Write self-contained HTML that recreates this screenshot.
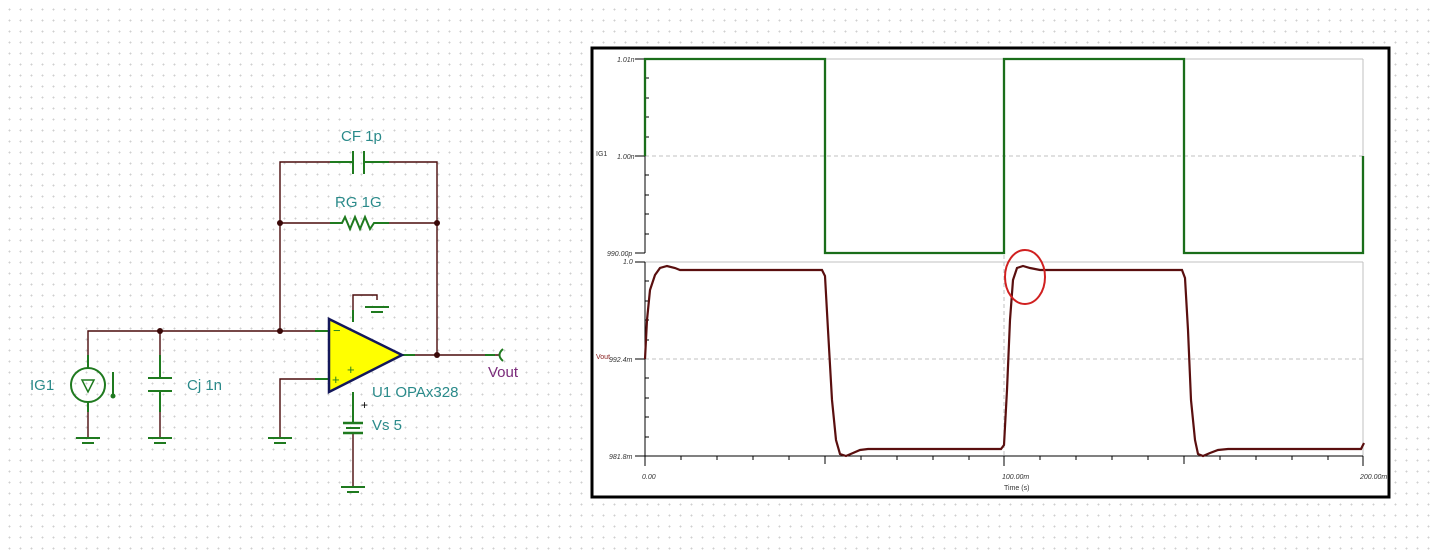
<!DOCTYPE html>
<html><head><meta charset="utf-8"><style>
html,body{margin:0;padding:0;}
body{width:1430px;height:552px;overflow:hidden;background:#fff;
background-image:radial-gradient(circle,#cfcfcf 0.8px,transparent 1.1px);background-size:11px 11px;background-position:4px 4px;}
svg{position:absolute;left:0;top:0;}
text{font-family:"Liberation Sans",sans-serif;}
</style></head><body>
<svg width="1430" height="552" viewBox="0 0 1430 552">
<g stroke="#4a0c0c" stroke-width="1.4" fill="none">
<polyline points="280,331 280,162 330,162"/>
<polyline points="389,162 437,162 437,355"/>
<line x1="280" y1="223" x2="330" y2="223"/>
<line x1="389" y1="223" x2="437" y2="223"/>
<polyline points="88,367 88,331 329,331"/>
<line x1="160" y1="331" x2="160" y2="372"/>
<line x1="402" y1="355" x2="499" y2="355"/>
<polyline points="280,438 280,379 329,379"/>
<polyline points="353,320 353,295 377,295 377,300"/>
<line x1="353" y1="392" x2="353" y2="420"/>
<line x1="353" y1="433" x2="353" y2="487"/>
<line x1="160" y1="397" x2="160" y2="438"/>
<line x1="88" y1="403" x2="88" y2="438"/>
</g>
<g fill="#3a0808">
<circle cx="280" cy="223" r="3"/><circle cx="437" cy="223" r="3"/>
<circle cx="160" cy="331" r="3"/><circle cx="280" cy="331" r="3"/><circle cx="437" cy="355" r="3"/>
</g>
<g stroke="#1f7a1f" stroke-width="2" fill="none">
<line x1="330" y1="162" x2="353" y2="162"/><line x1="364" y1="162" x2="389" y2="162"/>
<line x1="353" y1="151" x2="353" y2="174"/><line x1="364" y1="151" x2="364" y2="174"/>
<polyline points="330,223 342,223 345,217 350,229 355,217 360,229 365,217 370,229 374,223 389,223"/>
<line x1="160" y1="355" x2="160" y2="378"/><line x1="160" y1="391" x2="160" y2="412"/>
<line x1="148" y1="378" x2="172" y2="378"/><line x1="148" y1="391" x2="172" y2="391"/>
<circle cx="88" cy="385" r="17"/>
<polygon points="82,380 94,380 88,392" stroke-width="1.5"/>
<line x1="88" y1="355" x2="88" y2="368"/><line x1="88" y1="402" x2="88" y2="412"/>
<line x1="113" y1="372" x2="113" y2="395"/>
<line x1="315" y1="331" x2="329" y2="331"/><line x1="315" y1="379" x2="329" y2="379"/>
<line x1="402" y1="355" x2="415" y2="355"/><line x1="485" y1="355" x2="495" y2="355"/>
<path d="M503,349 Q496,355 503,361"/>
<line x1="353" y1="310" x2="353" y2="322"/><line x1="353" y1="392" x2="353" y2="405"/>
<line x1="353" y1="405" x2="353" y2="422"/>
<line x1="343" y1="423" x2="363" y2="423" stroke-width="2.5"/><line x1="346" y1="428" x2="360" y2="428"/>
<line x1="343" y1="433" x2="363" y2="433" stroke-width="2.5"/>
</g>
<circle cx="113" cy="396" r="2.5" fill="#1f7a1f"/>
<g stroke="#1f7a1f" stroke-width="2">
<line x1="76" y1="438" x2="100" y2="438"/><line x1="82" y1="443" x2="94" y2="443"/>
<line x1="148" y1="438" x2="172" y2="438"/><line x1="154" y1="443" x2="166" y2="443"/>
<line x1="268" y1="438" x2="292" y2="438"/><line x1="274" y1="443" x2="286" y2="443"/>
<line x1="365" y1="307" x2="389" y2="307"/><line x1="371" y1="312" x2="383" y2="312"/>
<line x1="341" y1="487" x2="365" y2="487"/><line x1="347" y1="492" x2="359" y2="492"/>
</g>
<polygon points="329,319 329,392 402,355" fill="#ffff00" stroke="#14185a" stroke-width="2.5"/>
<text x="333" y="335" fill="#1f7a1f" font-size="13">−</text>
<text x="332" y="384" fill="#1f7a1f" font-size="13">+</text>
<text x="347" y="374" fill="#1f7a1f" font-size="13">+</text>
<text x="361" y="409" fill="#000" font-size="12">+</text>
<g fill="#2a8a8a" font-size="15">
<text x="341" y="141">CF 1p</text>
<text x="335" y="207">RG 1G</text>
<text x="30" y="390">IG1</text>
<text x="187" y="390">Cj 1n</text>
<text x="372" y="397">U1 OPAx328</text>
<text x="372" y="430">Vs 5</text>
</g>
<text x="488" y="377" fill="#7a2a7a" font-size="15">Vout</text>

<rect x="592" y="48" width="797" height="449" fill="#fff" stroke="#000" stroke-width="3"/>
<g stroke="#c0c0c0" stroke-width="1" fill="none">
<line x1="645" y1="59" x2="1363" y2="59"/><line x1="645" y1="262" x2="1363" y2="262"/>
<line x1="1363" y1="59" x2="1363" y2="253"/><line x1="1363" y1="262" x2="1363" y2="456"/>
<g stroke-dasharray="4,3">
<line x1="645" y1="156" x2="1363" y2="156"/><line x1="645" y1="359" x2="1363" y2="359"/>
<line x1="1004" y1="59" x2="1004" y2="456"/>
</g>
</g>
<g stroke="#000" stroke-width="1">
<line x1="645" y1="59" x2="645" y2="253"/><line x1="645" y1="262" x2="645" y2="456"/>
<line x1="635" y1="253" x2="645" y2="253"/><line x1="635" y1="59" x2="645" y2="59"/><line x1="635" y1="156" x2="645" y2="156"/>
<line x1="635" y1="262" x2="645" y2="262"/><line x1="635" y1="359" x2="645" y2="359"/><line x1="635" y1="456" x2="1363" y2="456"/>
<line x1="645" y1="456" x2="645" y2="466"/><line x1="1004" y1="456" x2="1004" y2="466"/><line x1="1363" y1="456" x2="1363" y2="466"/>
<line x1="825" y1="456" x2="825" y2="464"/><line x1="1184" y1="456" x2="1184" y2="464"/>
<path d="M681,456v4M717,456v4M753,456v4M789,456v4M861,456v4M897,456v4M933,456v4M969,456v4M1040,456v4M1076,456v4M1112,456v4M1148,456v4M1220,456v4M1256,456v4M1292,456v4M1328,456v4"/>
<path d="M645,78h4M645,98h4M645,117h4M645,137h4M645,175h4M645,195h4M645,214h4M645,234h4M645,281h4M645,301h4M645,320h4M645,340h4M645,378h4M645,398h4M645,417h4M645,437h4"/>
</g>
<polyline points="645,156 645,59 825,59 825,253 1004,253 1004,59 1184,59 1184,253 1363,253 1363,156" fill="none" stroke="#1a6e1a" stroke-width="2.3"/>
<path d="M645,359 L647,320 650,290 655,275 660,268 667,266 675,268 680,270 822,270 825,276 828,330 832,400 836,440 840,454 846,456 853,453 860,450 868,449 1001,449 1004,445 1007,390 1010,320 1013,280 1017,268 1023,266 1030,268 1040,270 1182,270 1185,278 1188,330 1191,400 1195,440 1198,454 1203,456 1210,453 1218,450 1228,449 1361,449 1364,443" fill="none" stroke="#5a0f0f" stroke-width="2.2"/>
<ellipse cx="1025" cy="277" rx="20" ry="27" fill="none" stroke="#d02020" stroke-width="2"/>
<g font-size="7" font-style="italic" fill="#333">
<text x="617" y="62">1.01n</text>
<text x="617" y="159">1.00n</text>
<text x="607" y="256">990.00p</text>
<text x="623" y="264">1.0</text>
<text x="609" y="362">992.4m</text>
<text x="609" y="459">981.8m</text>
<text x="642" y="479">0.00</text>
<text x="1002" y="479">100.00m</text>
<text x="1360" y="479">200.00m</text>
</g>
<text x="596" y="156" font-size="7" fill="#333">IG1</text>
<text x="596" y="359" font-size="7" fill="#8a2020">Vout</text>
<text x="1004" y="490" font-size="7" fill="#333">Time (s)</text>
</svg>
</body></html>
